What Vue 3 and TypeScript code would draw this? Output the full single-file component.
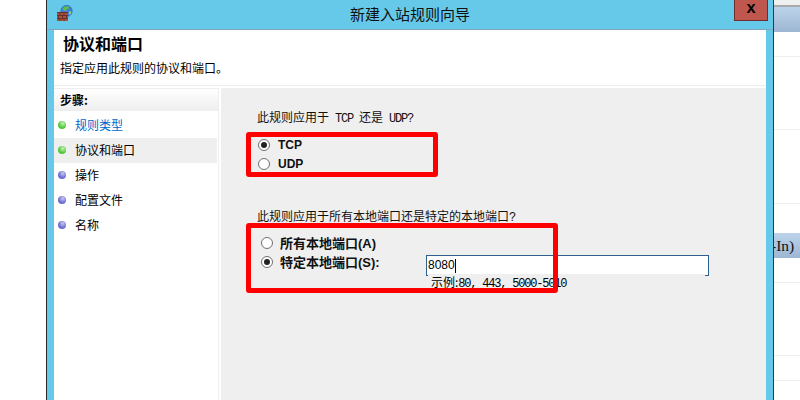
<script setup lang="ts">
interface Step {
  label: string
  state: 'done' | 'current' | 'todo'
}

const steps: Step[] = [
  { label: '规则类型', state: 'done' },
  { label: '协议和端口', state: 'current' },
  { label: '操作', state: 'todo' },
  { label: '配置文件', state: 'todo' },
  { label: '名称', state: 'todo' },
]

// rows of the list behind the dialog, only the right edge shows
const rowsAbove = [25, 73, 74]
const rowsBelow = [25, 73, 25]
</script>

<template>
  <div class="screen">
    <div class="left-gap"></div>

    <div class="window">
      <div class="titlebar">
        <svg class="app-icon" width="16" height="17" viewBox="0 0 16 17">
          <circle cx="9.5" cy="6" r="5.7" fill="#3d7fd6" />
          <circle cx="9.5" cy="6" r="5.7" fill="none" stroke="#2a5fb0" stroke-width=".6" />
          <path d="M5.5 3.5c1.500-2.500 5-3 6.500-1.500.5 1.500-1 1.500-2 2.500s-.5 2-2 1.500-2-1-2.500-2.500z" fill="#5dbb4a" />
          <path d="M12 6.500c1-.5 2-.5 2.500.5-.5 1.500-1 2.500-2 3-.5-1-1-2.500-.5-3.500z" fill="#8fd070" />
          <rect x="0" y="7" width="11" height="9" fill="#a5533f" />
          <path d="M0 7.500h11M0 10.500h11M0 13.500h11M3 7v3M7 7v3M1.500 10v3M5.500 10v3M9.500 10v3M3 13v3M7 13v3" stroke="#6b2f25" stroke-width="1" fill="none" />
        </svg>
        <span class="title">新建入站规则向导</span>
        <button class="close">x</button>
      </div>

      <div class="content">
        <header class="head">
          <h1>协议和端口</h1>
          <p>指定应用此规则的协议和端口。</p>
        </header>

        <div class="body">
          <aside class="sidebar">
            <div class="side-title">步骤:</div>
            <ul>
              <li v-for="step in steps" :key="step.label" class="step" :class="step.state">
                <i class="dot"></i>
                <span>{{ step.label }}</span>
              </li>
            </ul>
          </aside>

          <main class="panel">
            <p class="question q1">此规则应用于<span class="mono">&nbsp;TCP&nbsp;</span>还是<span class="mono">&nbsp;UDP?</span></p>
            <label class="radio"><i class="circle on"></i><b>TCP</b></label>
            <label class="radio"><i class="circle"></i><b>UDP</b></label>

            <p class="question q2">此规则应用于所有本地端口还是特定的本地端口<span class="mono">?</span></p>
            <label class="radio wide"><i class="circle"></i><b>所有本地端口(A)</b></label>
            <div class="port-row">
              <label class="radio wide"><i class="circle on"></i><b>特定本地端口(S):</b></label>
              <div class="port-input">8080<i class="caret"></i></div>
            </div>
            <p class="hint">示例:<span class="mono">80, 443, 5000-5010</span></p>

            <div class="mark mark-proto"></div>
            <div class="mark mark-port"></div>
          </main>
        </div>
      </div>
    </div>

    <div class="behind">
      <div class="b-top"></div>
      <div class="b-columns"></div>
      <div v-for="(h, i) in rowsAbove" :key="'a' + i" class="b-row" :style="{ height: h + 'px' }"></div>
      <div class="b-spacer"></div>
      <div class="b-band">-In)</div>
      <div v-for="(h, i) in rowsBelow" :key="'b' + i" class="b-row" :style="{ height: h + 'px' }"></div>
    </div>
  </div>
</template>

<style>
html,
body {
  margin: 0;
  background: #fff;
}
</style>

<style scoped>
.screen {
  width: 800px;
  height: 400px;
  display: flex;
  overflow: hidden;
  background: #fff;
  font-family: "Noto Sans CJK SC", "Liberation Sans", sans-serif;
  font-size: 12px;
  color: #000;
}

.left-gap {
  width: 46px;
  flex: none;
}

.window {
  width: 728px;
  flex: none;
  box-sizing: border-box;
  border-left: 1px solid #2e2a28;
  border-right: 1px solid #2e3a42;
  background: #66c9ea;
  display: flex;
  flex-direction: column;
  position: relative;
}

.titlebar {
  height: 30px;
  flex: none;
  display: flex;
  align-items: center;
  justify-content: center;
  box-sizing: border-box;
  border-bottom: 1px solid #7fa9b8;
}

.app-icon {
  position: absolute;
  left: 10px;
  top: 5px;
}

.title {
  font-size: 15px;
  line-height: 20px;
  color: #111;
  margin-bottom: 1px;
}

.close {
  position: absolute;
  left: 687px;
  top: -1px;
  width: 34px;
  height: 22px;
  padding: 0 0 3px;
  box-sizing: border-box;
  border: 1px solid #6d2f2b;
  background: #c0574f;
  color: #000;
  font: bold 16px/16px "Liberation Mono", monospace;
}

.content {
  flex: 1;
  margin: 0 7px;
  background: #fff;
  display: flex;
  flex-direction: column;
  min-height: 0;
}

.head {
  height: 56px;
  flex: none;
  box-sizing: border-box;
  border-bottom: 1px solid #eee;
  padding: 2px 0 0 6px;
}

.head h1 {
  margin: 0 0 0 3px;
  font-size: 16px;
  line-height: 22px;
  font-weight: 700;
}

.head p {
  margin: 6px 0 0;
  font-size: 12px;
  line-height: 16px;
}

.body {
  flex: 1;
  display: flex;
  padding-top: 2px;
  min-height: 0;
}

.sidebar {
  width: 165px;
  flex: none;
  box-sizing: border-box;
  border-right: 1px solid #eee;
}

.side-title {
  height: 23px;
  line-height: 21px;
  padding-left: 6px;
  font-weight: 700;
  box-sizing: border-box;
  border-top: 1px solid #eee;
  background: linear-gradient(#fff, #eee);
}

.sidebar ul {
  margin: 0;
  padding: 2px 0 0;
  list-style: none;
}

.step {
  height: 25px;
  box-sizing: border-box;
  padding: 0 0 2px 4px;
  display: flex;
  align-items: center;
  gap: 9px;
  margin-right: 1px;
}

.step.done {
  color: #0066cc;
}

.step.current {
  background: #efefef;
  color: #000;
}

.dot {
  width: 8px;
  height: 8px;
  border-radius: 50%;
  background: radial-gradient(circle at 60% 30%, #c8f0b0, #52c63c 60%);
}

.step.todo .dot {
  background: radial-gradient(circle at 60% 30%, #c8c8f0, #6a6ad0 60%);
}

.panel {
  flex: 1;
  margin-left: 2px;
  background: #efefef;
  position: relative;
  padding: 21px 0 0 36px;
}

.question {
  margin: 0;
  line-height: 16px;
  font-size: 12px;
  color: #111;
  white-space: nowrap;
}

.mono {
  font-family: "Liberation Mono", monospace;
  font-size: 12px;
  letter-spacing: -1.2px;
}

.q1 {
  margin-bottom: 8px;
}

.q2 {
  margin-top: 35px;
  margin-bottom: 7px;
}

.radio {
  height: 19px;
  display: flex;
  align-items: center;
  gap: 8px;
  margin-left: 1px;
  white-space: nowrap;
  font-family: "Liberation Sans", "Noto Sans CJK SC", sans-serif;
  font-size: 12px;
}

.radio.wide {
  gap: 7px;
  margin-left: 4px;
  font-size: 13px;
}

.radio b {
  font-weight: 700;
  color: #111;
}

.circle {
  width: 12px;
  height: 12px;
  box-sizing: border-box;
  border: 1px solid #707070;
  border-radius: 50%;
  background: #fff;
  position: relative;
  flex: none;
}

.circle.on::after {
  content: '';
  position: absolute;
  inset: 2px;
  border-radius: 50%;
  background: #222;
}

.port-row {
  display: flex;
  align-items: flex-start;
  height: 20px;
}

.port-row .radio {
  width: 165px;
}

.port-input {
  width: 283px;
  height: 21px;
  margin-top: 3px;
  box-sizing: border-box;
  border: 1px solid #2f5f8c;
  background: #fff;
  padding-left: 1px;
  font: 12px/21px "Liberation Sans", sans-serif;
  display: flex;
  align-items: center;
}

.caret {
  width: 1px;
  height: 14px;
  background: #000;
}

.hint {
  position: relative;
  margin: 2px 0 0 171px;
  width: 277px;
  height: 15px;
  padding-left: 3px;
  box-sizing: border-box;
  background: #efefef;
  font-size: 12px;
  line-height: 15px;
  white-space: nowrap;
}

.mark {
  position: absolute;
  box-sizing: border-box;
  border: 5px solid #f00;
  border-radius: 3px;
}

.mark-proto {
  left: 25px;
  top: 44px;
  width: 192px;
  height: 45px;
}

.mark-port {
  left: 25px;
  top: 135px;
  width: 312px;
  height: 70px;
}

.behind {
  flex: 1;
  min-width: 0;
  overflow: hidden;
}

.b-top {
  height: 5px;
  background: #f0f0f0;
  border-bottom: 2px solid #aaa;
}

.b-columns {
  height: 25px;
  background: linear-gradient(#bcd3ea, #9db6d3);
}

.b-row {
  box-sizing: border-box;
  border-bottom: 1px solid #eee;
}

.b-spacer {
  height: 29px;
}

.b-band {
  height: 25px;
  background: linear-gradient(#bcd3ea, #9db6d3);
  font: 15.5px/25px "Liberation Serif", serif;
  color: #111;
  white-space: nowrap;
  text-indent: -3px;
}
</style>
